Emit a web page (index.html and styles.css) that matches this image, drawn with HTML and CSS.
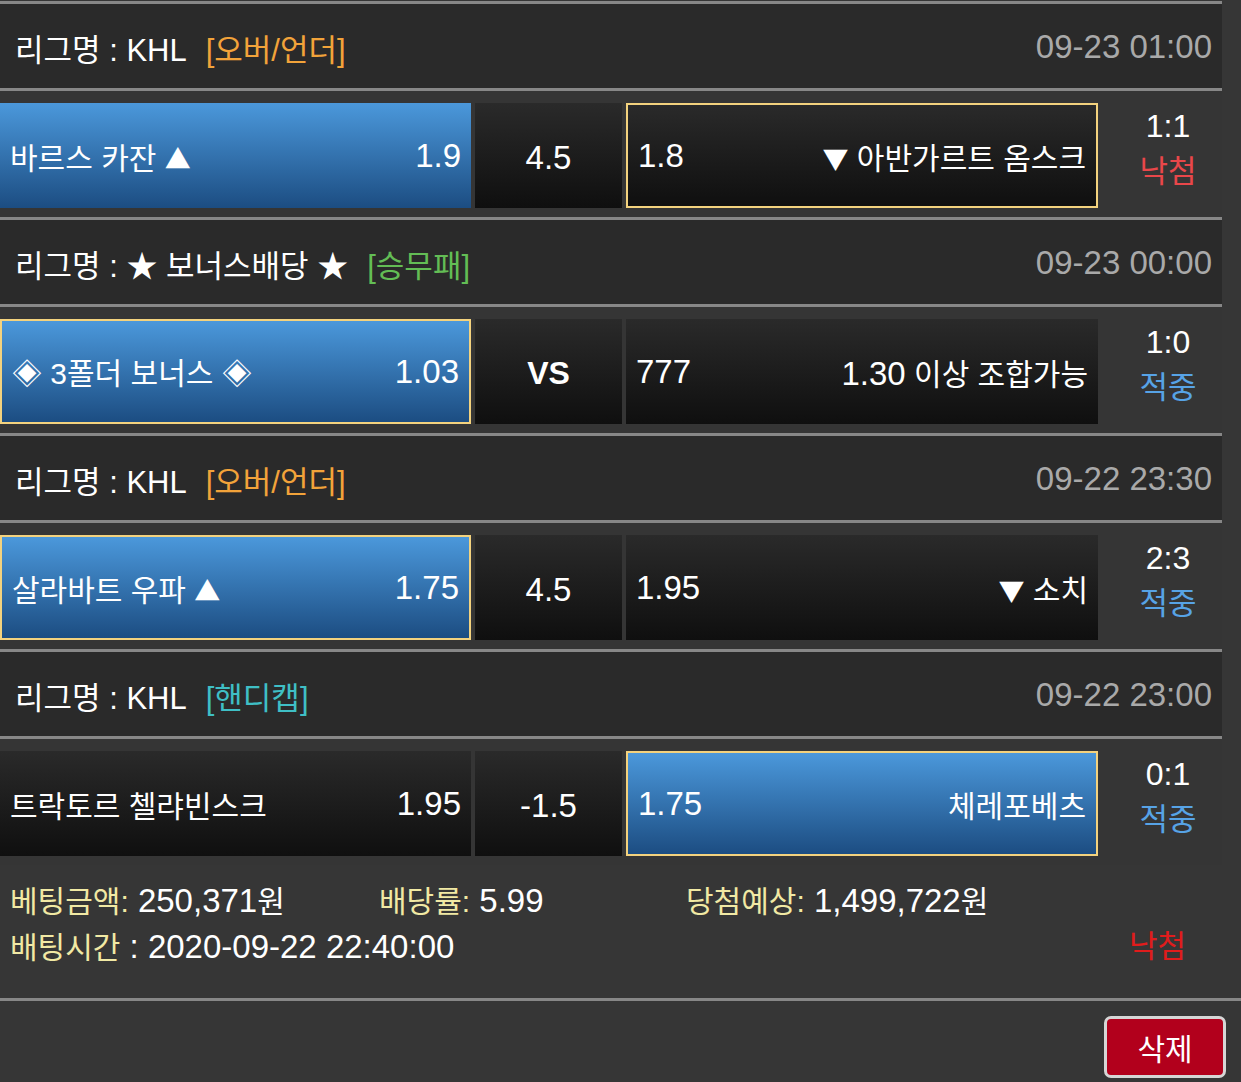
FILE: index.html
```html
<!DOCTYPE html>
<html lang="ko">
<head>
<meta charset="utf-8">
<title>배팅내역</title>
<link rel="stylesheet" href="styles.css">
</head>
<body>
<div class="list">
  <div class="league">
    <div class="name">리그명 : KHL<span class="tag orange">[오버/언더]</span></div>
    <div class="date">09-23 01:00</div>
  </div>
  <div class="match">
    <div class="cell blue"><span class="team">바르스 카잔 <span class="tri">▲</span></span><span class="odd">1.9</span></div>
    <div class="cell mid"><span class="odd">4.5</span></div>
    <div class="cell sel"><span class="odd">1.8</span><span class="team"><span class="tri">▼</span> 아반가르트 옴스크</span></div>
    <div class="result"><span class="score">1:1</span><span class="lose">낙첨</span></div>
  </div>

  <div class="league">
    <div class="name">리그명 : ★ 보너스배당 ★<span class="tag green">[승무패]</span></div>
    <div class="date">09-23 00:00</div>
  </div>
  <div class="match">
    <div class="cell blue sel"><span class="team">◈ 3폴더 보너스 ◈</span><span class="odd">1.03</span></div>
    <div class="cell mid"><span class="vs">VS</span></div>
    <div class="cell"><span class="odd">777</span><span class="team"><span class="num">1.30</span> 이상 조합가능</span></div>
    <div class="result"><span class="score">1:0</span><span class="win">적중</span></div>
  </div>

  <div class="league">
    <div class="name">리그명 : KHL<span class="tag orange">[오버/언더]</span></div>
    <div class="date">09-22 23:30</div>
  </div>
  <div class="match">
    <div class="cell blue sel"><span class="team">살라바트 우파 <span class="tri">▲</span></span><span class="odd">1.75</span></div>
    <div class="cell mid"><span class="odd">4.5</span></div>
    <div class="cell"><span class="odd">1.95</span><span class="team"><span class="tri">▼</span> 소치</span></div>
    <div class="result"><span class="score">2:3</span><span class="win">적중</span></div>
  </div>

  <div class="league">
    <div class="name">리그명 : KHL<span class="tag teal">[핸디캡]</span></div>
    <div class="date">09-22 23:00</div>
  </div>
  <div class="match last">
    <div class="cell"><span class="team">트락토르 첼랴빈스크</span><span class="odd">1.95</span></div>
    <div class="cell mid"><span class="odd">-1.5</span></div>
    <div class="cell blue sel"><span class="odd">1.75</span><span class="team">체레포베츠</span></div>
    <div class="result"><span class="score">0:1</span><span class="win">적중</span></div>
  </div>
</div>

<div class="summary">
  <div class="line1">
    <span class="item w1"><span class="lbl">베팅금액:</span> 250,371<span class="ko">원</span></span>
    <span class="item w2"><span class="lbl">배당률:</span> 5.99</span>
    <span class="item"><span class="lbl">당첨예상:</span> 1,499,722<span class="ko">원</span></span>
  </div>
  <div class="line2">
    <span class="item"><span class="lbl">배팅시간</span> : 2020-09-22 22:40:00</span>
    <span class="final-lose">낙첨</span>
  </div>
</div>

<div class="actions">
  <button class="btn-delete" type="button">삭제</button>
</div>
</body>
</html>
```

FILE: styles.css
```css
html, body {
  margin: 0;
  padding: 0;
}
body {
  background: #363636;
  color: #ffffff;
  font-family: "Liberation Sans", "Noto Sans CJK KR", sans-serif;
  padding-top: 1px;
}
.list {
  width: 1222px;
  border-top: 3px solid #878787;
}
.league {
  box-sizing: border-box;
  background: #2a2a2a;
  border-bottom: 3px solid #878787;
  height: 87px;
  display: flex;
  align-items: center;
  justify-content: space-between;
  padding: 2px 10px 0 15px;
  font-size: 31px;
}
.league .name {
  white-space: nowrap;
}
.tag {
  margin-left: 19px;
}
.orange { color: #f2a33a; }
.green { color: #63bd55; }
.teal { color: #3fbfc5; }
.date {
  color: #a9a9a9;
  font-size: 33px;
}
.match {
  display: grid;
  grid-template-columns: 471px 147px 472px 1fr;
  column-gap: 4px;
  padding: 12px 0 9px;
  border-bottom: 3px solid #878787;
  background: #353535;
}
.match.last {
  border-bottom: none;
}
.cell {
  height: 105px;
  box-sizing: border-box;
  display: flex;
  align-items: center;
  justify-content: space-between;
  padding: 0 10px;
  font-size: 30px;
  background: linear-gradient(#2a2a2a, #0f0f0f);
  white-space: nowrap;
}
.cell.blue {
  background: linear-gradient(#4b98db, #1c4d82);
}
.cell.sel {
  border: 2px solid #f3d27e;
}
.cell .odd,
.cell .num {
  font-size: 33px;
}
.tri {
  font-family: "Noto Sans CJK KR", sans-serif;
  font-size: 26px;
}
.cell.mid {
  justify-content: center;
  padding-top: 4px;
}
.vs {
  font-size: 32px;
  font-weight: bold;
}
.result {
  display: flex;
  flex-direction: column;
  align-items: center;
  padding-left: 12px;
  font-size: 32px;
  line-height: 46px;
}
.lose {
  color: #e9474a;
  font-size: 31px;
}
.win {
  color: #57a3e6;
  font-size: 31px;
}
.summary {
  padding: 13px 10px 28px;
  font-size: 33px;
  line-height: 45px;
  border-bottom: 3px solid #878787;
  white-space: nowrap;
}
.line1 {
  display: flex;
}
.w1 { width: 369px; }
.w2 { width: 307px; }
.lbl {
  color: #f1e9a4;
  font-size: 30px;
}
.ko {
  font-size: 30px;
}
.line2 {
  display: flex;
  justify-content: space-between;
}
.final-lose {
  color: #e01c1c;
  margin-right: 45px;
  font-size: 31px;
}
.actions {
  display: flex;
  justify-content: flex-end;
  padding: 15px 15px 0;
}
.btn-delete {
  width: 122px;
  height: 62px;
  box-sizing: border-box;
  border: 3px solid #d6d6d6;
  border-radius: 7px;
  background: #b2001c;
  color: #ffffff;
  font-family: "Liberation Sans", "Noto Sans CJK KR", sans-serif;
  font-size: 30px;
  padding: 0;
}
```
